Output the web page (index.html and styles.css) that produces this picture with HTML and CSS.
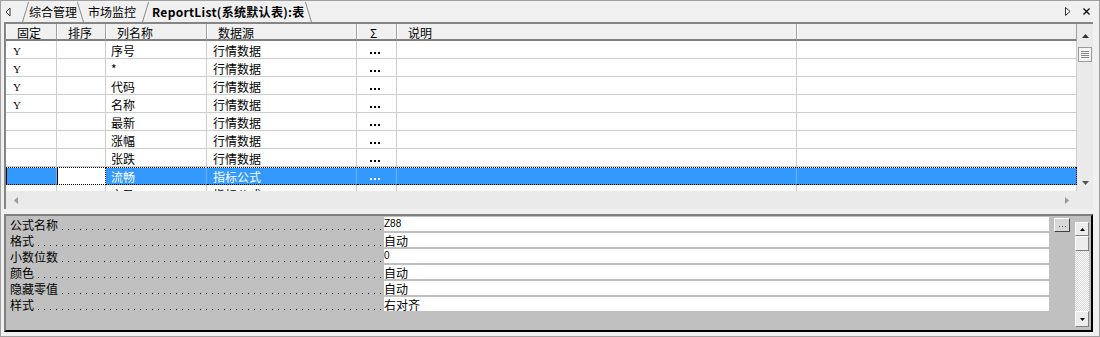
FILE: index.html
```html
<!DOCTYPE html>
<html lang="zh-CN">
<head>
    <meta charset="UTF-8">
    <title>ReportList</title>
    <link rel="stylesheet" href="styles.css">
</head>
<body>
    <div class="window">
        <div class="tabbar">
            <span class="tab-nav">
                <svg width="6" height="10" viewBox="0 0 6 10"><path d="M5 1 L1 5 L5 9 Z" fill="#fff" stroke="#333" stroke-width="1"/></svg>
            </span>
            <div class="tab tab-edge tab-first">综合管理</div>
            <div class="tab tab-mid">市场监控</div>
            <div class="tab tab-edge tab-active">ReportList(系统默认表):表</div>
            <div class="tab-tools">
                <svg width="6" height="9" viewBox="0 0 6 9"><path d="M0.5 0.5 L5 4.5 L0.5 8.5 Z" fill="#fff" stroke="#333" stroke-width="1"/></svg>
                <svg width="7" height="7" viewBox="0 0 7 7"><path d="M0.5 0.5 L6.5 6.5 M6.5 0.5 L0.5 6.5" stroke="#111" stroke-width="1.4"/></svg>
            </div>
        </div>

        <div class="grid-box">
            <div class="grid-main">
                <div class="table-wrap">
                    <table class="grid">
                        <colgroup>
                            <col style="width:51px">
                            <col style="width:49px">
                            <col style="width:101px">
                            <col style="width:150px">
                            <col style="width:40px">
                            <col style="width:400px">
                            <col style="width:280px">
                        </colgroup>
                        <thead>
                            <tr>
                                <th>固定</th>
                                <th>排序</th>
                                <th>列名称</th>
                                <th>数据源</th>
                                <th class="c-sum">Σ</th>
                                <th>说明</th>
                                <th></th>
                            </tr>
                        </thead>
                        <tbody>
                            <tr>
                                <td class="c-fix">Y</td><td></td><td class="c-name">序号</td><td>行情数据</td><td class="c-sum"><span class="more"></span></td><td></td><td></td>
                            </tr>
                            <tr>
                                <td class="c-fix">Y</td><td></td><td class="c-name">*</td><td>行情数据</td><td class="c-sum"><span class="more"></span></td><td></td><td></td>
                            </tr>
                            <tr>
                                <td class="c-fix">Y</td><td></td><td class="c-name">代码</td><td>行情数据</td><td class="c-sum"><span class="more"></span></td><td></td><td></td>
                            </tr>
                            <tr>
                                <td class="c-fix">Y</td><td></td><td class="c-name">名称</td><td>行情数据</td><td class="c-sum"><span class="more"></span></td><td></td><td></td>
                            </tr>
                            <tr>
                                <td class="c-fix"></td><td></td><td class="c-name">最新</td><td>行情数据</td><td class="c-sum"><span class="more"></span></td><td></td><td></td>
                            </tr>
                            <tr>
                                <td class="c-fix"></td><td></td><td class="c-name">涨幅</td><td>行情数据</td><td class="c-sum"><span class="more"></span></td><td></td><td></td>
                            </tr>
                            <tr>
                                <td class="c-fix"></td><td></td><td class="c-name">张跌</td><td>行情数据</td><td class="c-sum"><span class="more"></span></td><td></td><td></td>
                            </tr>
                            <tr class="sel">
                                <td class="c-fix"></td><td class="edit"></td><td class="c-name">流畅</td><td>指标公式</td><td class="c-sum"><span class="more"></span></td><td></td><td class="last"></td>
                            </tr>
                            <tr>
                                <td class="c-fix"></td><td></td><td class="c-name">市盈</td><td>指标公式</td><td class="c-sum"><span class="more"></span></td><td></td><td></td>
                            </tr>
                        </tbody>
                    </table>
                </div>
                <div class="vscroll">
                    <svg class="arr-up" width="7" height="4" viewBox="0 0 7 4"><path d="M0 4 H7 L3.5 0 Z" fill="#333"/></svg>
                    <div class="thumb"><i></i><i></i><i></i><i></i></div>
                    <svg class="arr-down" width="7" height="4" viewBox="0 0 7 4"><path d="M0 0 H7 L3.5 4 Z" fill="#555"/></svg>
                </div>
            </div>
            <div class="hscroll">
                <svg width="4" height="7" viewBox="0 0 4 7"><path d="M4 0 V7 L0 3.5 Z" fill="#999"/></svg>
                <svg class="arr-right" width="4" height="7" viewBox="0 0 4 7"><path d="M0 0 V7 L4 3.5 Z" fill="#999"/></svg>
            </div>
        </div>

        <div class="props">
            <div class="prop-list">
                <div class="prop-row"><div class="prop-label"><span>公式名称</span></div><div class="prop-value latin">Z88</div></div>
                <div class="prop-row"><div class="prop-label"><span>格式</span></div><div class="prop-value">自动</div></div>
                <div class="prop-row"><div class="prop-label"><span>小数位数</span></div><div class="prop-value latin">0</div></div>
                <div class="prop-row"><div class="prop-label"><span>颜色</span></div><div class="prop-value">自动</div></div>
                <div class="prop-row"><div class="prop-label"><span>隐藏零值</span></div><div class="prop-value">自动</div></div>
                <div class="prop-row"><div class="prop-label"><span>样式</span></div><div class="prop-value">右对齐</div></div>
            </div>
            <div class="prop-btn"><span class="btn-dots"></span></div>
            <div class="pscroll">
                <div class="pbtn">
                    <svg width="5" height="3" viewBox="0 0 5 3"><path d="M0 3 H5 L2.5 0 Z" fill="#000"/></svg>
                </div>
                <div class="pbtn pthumb"></div>
                <div class="ptrack"></div>
                <div class="pbtn pbtn-down">
                    <svg width="5" height="3" viewBox="0 0 5 3"><path d="M0 0 H5 L2.5 3 Z" fill="#000"/></svg>
                </div>
            </div>
        </div>
    </div>
</body>
</html>
```

FILE: styles.css
```css
* {
    box-sizing: border-box;
}

body {
    margin: 0;
    font-family: "Noto Sans CJK SC", sans-serif;
    font-size: 12px;
    color: #000;
    background: #f0f0f0;
}

.window {
    width: 1100px;
    height: 337px;
    border: 1px solid #a0a0a0;
    background: #f0f0f0;
    overflow: hidden;
}

/* tab strip */
.tabbar {
    display: flex;
    height: 21px;
}

.tab-nav {
    width: 21px;
    display: flex;
    align-items: center;
    padding-left: 4px;
}

.tab {
    position: relative;
    z-index: 1;
    display: flex;
    align-items: center;
    padding-top: 1px;
    line-height: 14px;
    white-space: nowrap;
}

.tab-edge {
    z-index: 2;
}

.tab-edge::before,
.tab-edge::after {
    content: "";
    position: absolute;
    top: 1px;
    bottom: 0;
    width: 50%;
    background: #f0f0f0;
    transform-origin: bottom;
    z-index: -1;
}

.tab-edge::before {
    left: 0;
    border-left: 1px solid #8a8a8a;
    transform: skewX(-17deg);
}

.tab-edge::after {
    right: 0;
    border-right: 1px solid #8a8a8a;
    transform: skewX(17deg);
}

.tab-first {
    padding-left: 7px;
    padding-right: 7px;
}

.tab-mid {
    padding-left: 4px;
    padding-right: 6px;
}

.tab-active {
    padding-left: 10px;
    padding-right: 8px;
    font-weight: bold;
    letter-spacing: 0.3px;
}

.tab-tools {
    margin-left: auto;
    display: flex;
    align-items: center;
    gap: 12px;
    padding-right: 9px;
}

/* column grid */
.grid-box {
    margin-left: 3px;
    width: 1089px;
    border-top: 2px solid #858585;
    border-left: 2px solid #858585;
}

.grid-main {
    display: flex;
    height: 167px;
}

.table-wrap {
    width: 1071px;
    overflow: hidden;
}

.grid {
    border-collapse: separate;
    border-spacing: 0;
    table-layout: fixed;
    width: 1071px;
}

.grid th {
    background: #f0f0f0;
    font-weight: normal;
    text-align: left;
    padding: 3px 0 0 11px;
    line-height: 12px;
    border-bottom: 2px solid #808080;
    border-right: 1px solid #a0a0a0;
    box-shadow: inset 1px 0 #fff;
    white-space: nowrap;
}

.grid td {
    background: #fff;
    line-height: 14px;
    padding: 3px 0 0 6px;
    border-right: 1px solid #cdcdcd;
    border-bottom: 1px solid #cdcdcd;
    white-space: nowrap;
    overflow: hidden;
}

.grid .c-sum {
    padding-left: 13px;
}

.grid td.c-fix {
    padding-left: 7px;
    font-family: "Liberation Serif", serif;
    font-size: 11px;
}

.grid td.c-name {
    padding-left: 5px;
}

.more {
    display: inline-block;
    width: 10px;
    height: 2px;
    vertical-align: middle;
    background: repeating-linear-gradient(to right, #000 0 2px, transparent 2px 4px);
}

.grid tr.sel td {
    background: repeating-linear-gradient(to right, #000 0 1px, #fff 1px 2px) top / 100% 1px no-repeat, #3399ff;
    color: #fff;
    border-right-color: #6cb4ff;
    border-bottom: 1px dotted #000;
}

.grid tr.sel td.c-fix {
    box-shadow: inset 1px 0 #000;
}

.grid tr.sel td.edit {
    background: repeating-linear-gradient(to right, #000 0 1px, #fff 1px 2px) top / 100% 1px no-repeat, #fff;
    border-right: 1px dotted #000;
    box-shadow: inset 1px 0 #000;
}

.grid tr.sel td.last {
    border-right: 1px dotted #000;
}

.grid tr.sel .more {
    background: repeating-linear-gradient(to right, #fff 0 2px, transparent 2px 4px);
}

.vscroll {
    width: 16px;
    background: #eaeaea;
    display: flex;
    flex-direction: column;
    align-items: center;
    padding: 10px 0 6px 0;
}

.thumb {
    margin-top: 9px;
    width: 14px;
    height: 15px;
    border: 1px solid #9a9a9a;
    background: #f6f6f6;
    display: flex;
    flex-direction: column;
    align-items: center;
    justify-content: center;
    gap: 1px;
}

.thumb i {
    display: block;
    width: 8px;
    height: 1px;
    background: #8a8a8a;
}

.arr-down {
    margin-top: auto;
}

.hscroll {
    height: 18px;
    background: #eaeaea;
    display: flex;
    align-items: center;
    padding: 0 24px 0 8px;
}

.arr-right {
    margin-left: auto;
}

/* property panel */
.props {
    margin-top: 5px;
    margin-left: 3px;
    width: 1089px;
    height: 118px;
    border: 2px solid;
    border-color: #808080 #000 #000 #808080;
    background: #c0c0c0;
    display: flex;
    align-items: flex-start;
    padding-top: 1px;
}

.prop-list {
    width: 1043px;
}

.prop-row {
    display: flex;
    height: 14px;
    margin-bottom: 2px;
}

.prop-label {
    width: 378px;
    line-height: 15px;
    white-space: nowrap;
    background: repeating-linear-gradient(to right, transparent 0 2px, #000 2px 3px, transparent 3px 6px) 0 12px / 100% 1px no-repeat;
}

.prop-label span {
    background: #c0c0c0;
    padding: 0 1px 0 4px;
}

.prop-value {
    flex: 1;
    background: #fff;
    line-height: 15px;
    white-space: nowrap;
}

.prop-value.latin {
    font-family: "Liberation Sans", sans-serif;
    font-size: 10px;
    line-height: 14px;
}

.prop-btn {
    margin: 1px 0 0 5px;
    width: 16px;
    height: 14px;
    border: 1px solid;
    border-color: #fff #404040 #404040 #fff;
    background: #d8d8d8;
    display: flex;
    align-items: flex-end;
    justify-content: center;
    padding-bottom: 4px;
}

.btn-dots {
    width: 7px;
    height: 1px;
    background: repeating-linear-gradient(to right, #555 0 1px, transparent 1px 3px);
}

.pscroll {
    margin: 5px 0 0 5px;
    width: 14px;
    height: 105px;
    display: flex;
    flex-direction: column;
    background: repeating-conic-gradient(#fff 0 25%, #d6d6d6 0 50%) 0 0 / 2px 2px;
}

.pbtn {
    height: 14px;
    border: 1px solid;
    border-color: #fff #808080 #808080 #fff;
    background: #ececec;
    display: flex;
    align-items: center;
    justify-content: center;
}

.pthumb {
    height: 15px;
}

.ptrack {
    flex: 1;
}

.pbtn-down {
    height: 16px;
}
```
